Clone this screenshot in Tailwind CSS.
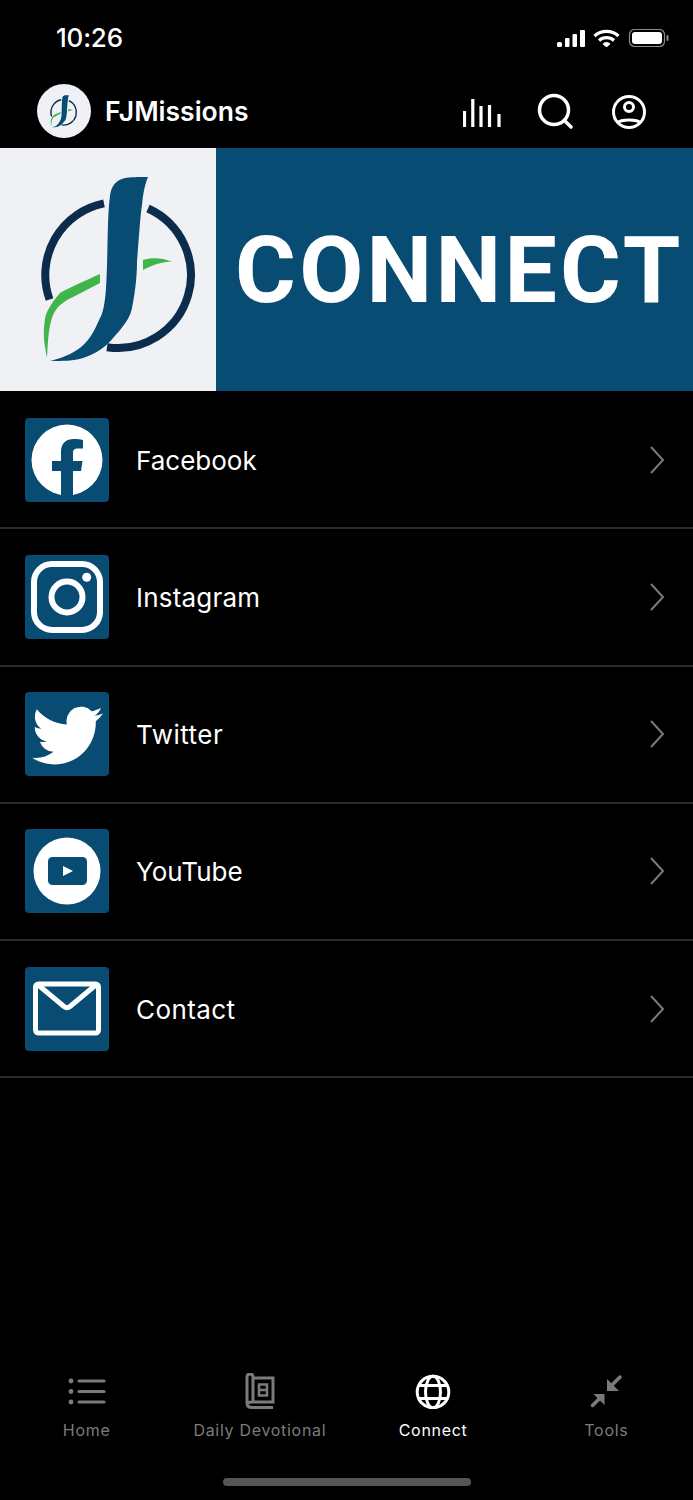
<!DOCTYPE html>
<html>
<head>
<meta charset="utf-8">
<script src="https://cdn.jsdelivr.net/npm/@tailwindcss/browser@4"></script>
</head>
<body class="bg-black">
<svg width="0" height="0" class="absolute">
  <symbol id="fj" viewBox="0 0 240 245">
    <path d="M104 55.400 A73 73 0 0 0 49.500 151.500" fill="none" stroke="#0b2c4c" stroke-width="8"/>
    <path d="M148 60.500 A73 73 0 0 1 107 199.200" fill="none" stroke="#0b2c4c" stroke-width="8"/>
    <path d="M148 29 C138 29 130 29 125 30 C116 32 111 38 110 48 C107 70 108 110 106 140 C105 155 103 165 100 170 C94 184 88 195 77 202 C68 208 58 211 50 213 C62 213 74 213 83 210 C96 206 107 198 113 190 C124 178 130 170 132 160 C136 140 137 125 137 113 C139 90 140 70 142 57 C143 45 145 36 148 29 Z" fill="#084b73"/>
    <path d="M100 126 V135 L77 147 C66 152 58 157 54 165 C49 175 48 190 47 210 C44 195 43 185 44.500 175 C45 165 50 157 60 145 C68 140 85 133 100 126 Z" fill="#3fb54a"/>
    <path d="M143 112 C152 109 162 110 172 113.500 C162 114 152 117 143 122 Z" fill="#3fb54a"/>
  </symbol>
</svg>
<div class="w-[693px] h-[1500px] bg-black flex flex-col font-['Inter',sans-serif] text-white overflow-hidden">
  <!-- status bar -->
  <div class="h-[76px] flex items-center justify-between pl-[56px] pr-[24px] shrink-0">
    <span class="text-[26px] font-medium leading-none tracking-[-0.2px]">10:26</span>
    <svg width="112" height="18" viewBox="557 29 112 18" fill="#fff">
      <rect x="557" y="42" width="5" height="5" rx="1.500"/>
      <rect x="565" y="38" width="4.500" height="9" rx="1"/>
      <rect x="572.500" y="34" width="4.500" height="13" rx="1"/>
      <rect x="580" y="30" width="5" height="17" rx="1"/>
      <path d="M594.500 36 A18 18 0 0 1 618.500 36" fill="none" stroke="#fff" stroke-width="3.200"/>
      <path d="M599 40.500 A11.500 11.500 0 0 1 614 40.500" fill="none" stroke="#fff" stroke-width="3.200"/>
      <path d="M602.500 44 A5 5 0 0 1 610.500 44 L606.500 47.500 Z"/>
      <rect x="629.500" y="29.500" width="35" height="17" rx="5" fill="none" stroke="#8a8a8a" stroke-width="1.200"/>
      <rect x="632" y="32" width="30" height="12" rx="3"/>
      <rect x="666.500" y="35" width="2" height="6" rx="1" fill="#8a8a8a"/>
    </svg>
  </div>
  <!-- header -->
  <div class="h-[72px] shrink-0 flex items-center pl-[37px] pr-[47px] pb-[2px]">
    <div class="w-[54px] h-[54px] rounded-full bg-[#eff1f5] flex items-center justify-center shrink-0">
      <svg width="42" height="43"><use href="#fj"/></svg>
    </div>
    <span class="ml-[14px] text-[26.500px] font-semibold leading-none">FJMissions</span>
    <div class="ml-auto flex items-center">
      <svg width="39" height="36" viewBox="463 92 39 36" fill="none" stroke="#fff" stroke-width="3.200">
        <path d="M464.500 126 V110 M472.800 126 V98 M481 126 V105 M489.500 126 V104 M499 126 V113"/>
      </svg>
      <svg width="36" height="36" viewBox="537 92 36 36" fill="none" stroke="#fff" stroke-width="3.500" stroke-linecap="round" class="ml-[35px]">
        <circle cx="554" cy="109" r="14.500"/><path d="M564.500 119.500 L571 126"/>
      </svg>
      <svg width="34" height="36" viewBox="612 92 34 36" fill="none" stroke="#fff" stroke-width="3" class="ml-[39px]">
        <circle cx="629" cy="111" r="15.500"/><circle cx="629" cy="106" r="4.500"/><path d="M617 122 C621 118 637 118 641 122"/>
      </svg>
    </div>
  </div>
  <!-- banner -->
  <div class="h-[243px] shrink-0 flex">
    <div class="w-[216px] bg-[#eff1f5] overflow-hidden shrink-0">
      <svg width="240" height="245"><use href="#fj"/></svg>
    </div>
    <div class="flex-1 bg-[#084b73] flex items-center pl-[19px] pt-[1px]">
      <span class="font-['Roboto',sans-serif] font-bold text-[93px] leading-none tracking-[3.300px] text-white whitespace-nowrap">CONNECT</span>
    </div>
  </div>
  <!-- rows -->
  <div class="shrink-0 pt-[1px]">
    <div class="h-[137.250px] border-b-2 border-[#2b2b2d] flex items-center pl-[25px] pr-[28px]">
      <svg width="84" height="84" viewBox="0 0 84 84" class="shrink-0">
        <rect width="84" height="84" rx="4" fill="#084b73"/>
        <circle cx="42" cy="42" r="35.500" fill="#fff"/>
        <path d="M36 78 V53 H27 V43 H36 V34 C36 25 41 21 49 21 C52 21 55 21 58 22 V30.500 H53 C49 30.500 48 32 48 35 V43 H57.500 L56 53 H48 V78 Z" fill="#084b73"/>
      </svg>
      <span class="ml-[27px] pt-[2px] text-[26px] leading-none">Facebook</span>
      <svg width="16" height="28" viewBox="0 0 16 28" class="ml-auto" fill="none" stroke="#7a7a7a" stroke-width="2"><path d="M2 1 L14 14 L2 27"/></svg>
    </div>
    <div class="h-[137.250px] border-b-2 border-[#2b2b2d] flex items-center pl-[25px] pr-[28px]">
      <svg width="84" height="84" viewBox="0 0 84 84" class="shrink-0">
        <rect width="84" height="84" rx="4" fill="#084b73"/>
        <rect x="9" y="9" width="66" height="66" rx="18" fill="none" stroke="#fff" stroke-width="6"/>
        <circle cx="42" cy="42" r="15.500" fill="none" stroke="#fff" stroke-width="6"/>
        <circle cx="61.700" cy="22.300" r="4.500" fill="#fff"/>
      </svg>
      <span class="ml-[27px] pt-[2px] text-[26px] leading-none tracking-[0.2px]">Instagram</span>
      <svg width="16" height="28" viewBox="0 0 16 28" class="ml-auto" fill="none" stroke="#7a7a7a" stroke-width="2"><path d="M2 1 L14 14 L2 27"/></svg>
    </div>
    <div class="h-[137.250px] border-b-2 border-[#2b2b2d] flex items-center pl-[25px] pr-[28px]">
      <svg width="84" height="84" viewBox="0 0 84 84" class="shrink-0">
        <rect width="84" height="84" rx="4" fill="#084b73"/>
        <path transform="translate(7 8) scale(2.960)" fill="#fff" d="M23.953 4.570a10 10 0 01-2.825.775 4.958 4.958 0 002.163-2.723c-.951.555-2.005.959-3.127 1.184a4.920 4.920 0 00-8.384 4.482C7.690 8.095 4.067 6.130 1.640 3.162a4.822 4.822 0 00-.666 2.475c0 1.710.870 3.213 2.188 4.096a4.904 4.904 0 01-2.228-.616v.060a4.923 4.923 0 003.946 4.827 4.996 4.996 0 01-2.212.085 4.936 4.936 0 004.604 3.417 9.867 9.867 0 01-6.102 2.105c-.390 0-.779-.023-1.170-.067a13.995 13.995 0 007.557 2.209c9.053 0 13.998-7.496 13.998-13.985 0-.210 0-.420-.015-.630A9.935 9.935 0 0024 4.590z"/>
      </svg>
      <span class="ml-[27px] pt-[2px] text-[26px] leading-none tracking-[0.5px]">Twitter</span>
      <svg width="16" height="28" viewBox="0 0 16 28" class="ml-auto" fill="none" stroke="#7a7a7a" stroke-width="2"><path d="M2 1 L14 14 L2 27"/></svg>
    </div>
    <div class="h-[137.250px] border-b-2 border-[#2b2b2d] flex items-center pl-[25px] pr-[28px]">
      <svg width="84" height="84" viewBox="0 0 84 84" class="shrink-0">
        <rect width="84" height="84" rx="4" fill="#084b73"/>
        <circle cx="42" cy="42" r="33.500" fill="#fff"/>
        <rect x="23" y="28" width="39" height="28" rx="4.500" fill="#084b73"/>
        <path d="M38 37 L48 42 L38 47 Z" fill="#fff"/>
      </svg>
      <span class="ml-[27px] pt-[2px] text-[26px] leading-none">YouTube</span>
      <svg width="16" height="28" viewBox="0 0 16 28" class="ml-auto" fill="none" stroke="#7a7a7a" stroke-width="2"><path d="M2 1 L14 14 L2 27"/></svg>
    </div>
    <div class="h-[137.250px] border-b-2 border-[#2b2b2d] flex items-center pl-[25px] pr-[28px]">
      <svg width="84" height="84" viewBox="0 0 84 84" class="shrink-0">
        <rect width="84" height="84" rx="4" fill="#084b73"/>
        <rect x="10.500" y="17" width="63" height="49" rx="3" fill="none" stroke="#fff" stroke-width="5"/>
        <path d="M12 17 L39 39.500 C41 41 43 41 45 39.500 L72 17" fill="none" stroke="#fff" stroke-width="5"/>
      </svg>
      <span class="ml-[27px] pt-[2px] text-[26px] leading-none tracking-[0.4px]">Contact</span>
      <svg width="16" height="28" viewBox="0 0 16 28" class="ml-auto" fill="none" stroke="#7a7a7a" stroke-width="2"><path d="M2 1 L14 14 L2 27"/></svg>
    </div>
  </div>
  <div class="flex-1"></div>
  <!-- tab bar -->
  <div class="grid grid-cols-4 shrink-0 h-[77px]">
    <div class="flex flex-col items-center text-[#7b7b7b]">
      <svg width="40" height="36" viewBox="0 0 40 36" fill="none" stroke="currentColor" stroke-width="3.200" stroke-linecap="round">
        <circle cx="4" cy="8" r="2.400" fill="currentColor" stroke="none"/><circle cx="4" cy="18.500" r="2.400" fill="currentColor" stroke="none"/><circle cx="4" cy="29" r="2.400" fill="currentColor" stroke="none"/>
        <path d="M12 8 H37 M12 18.500 H37 M12 29 H37"/>
      </svg>
      <span class="mt-[11px] text-[16px] font-normal leading-5 tracking-[0.7px]">Home</span>
    </div>
    <div class="flex flex-col items-center text-[#7b7b7b]">
      <svg width="30" height="36" viewBox="0 0 30 36" fill="none" stroke="currentColor" stroke-width="3">
        <path d="M28 34.500 H7 C3.500 34.500 2 32.500 2 30 V4 C2 2 3.500 1 5 1 C6.500 1 8 2 8 4 V29 M8 5 H28 V29 H8 C4 29 2 30 2 30"/>
        <path d="M14 11.500 H22 V22.500 H14 Z M14 17 H22" stroke-width="2.600"/>
      </svg>
      <span class="mt-[11px] text-[16px] font-normal leading-5 tracking-[0.7px]">Daily Devotional</span>
    </div>
    <div class="flex flex-col items-center text-white">
      <svg width="36" height="36" viewBox="0 0 36 36" fill="none" stroke="currentColor" stroke-width="3">
        <circle cx="18" cy="19" r="15.800"/>
        <ellipse cx="18" cy="19" rx="7.500" ry="15.800"/>
        <path d="M4 12.500 H32 M4 25.500 H32"/>
      </svg>
      <span class="mt-[11px] text-[16px] font-normal leading-5 tracking-[0.7px]">Connect</span>
    </div>
    <div class="flex flex-col items-center text-[#7b7b7b]">
      <svg width="36" height="36" viewBox="588 1373 36 36" fill="#7b7b7b" stroke="none">
        <path d="M607 1379 V1391 H619 Z"/>
        <path d="M620 1377 L612 1385" stroke="#7b7b7b" stroke-width="3.500" stroke-linecap="round"/>
        <path d="M593.500 1394 H604.500 V1405 Z"/>
        <path d="M592.500 1405.500 L599 1399" stroke="#7b7b7b" stroke-width="3.500" stroke-linecap="round"/>
      </svg>
      <span class="mt-[11px] text-[16px] font-normal leading-5 tracking-[0.7px]">Tools</span>
    </div>
  </div>
  <!-- home indicator -->
  <div class="h-[50px] shrink-0 flex justify-center pt-[28px]">
    <div class="w-[248px] h-[8px] rounded-full bg-[#555]"></div>
  </div>
</div>
</body>
</html>
